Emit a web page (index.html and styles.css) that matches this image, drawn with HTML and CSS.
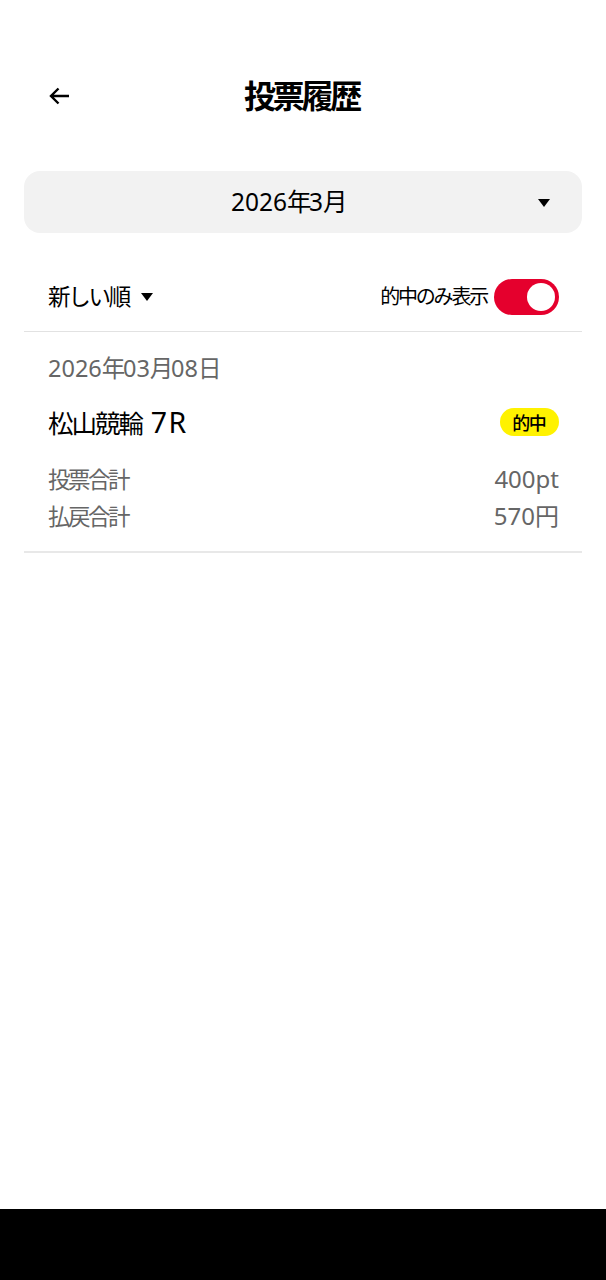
FILE: index.html
```html
<!DOCTYPE html>
<html lang="ja">
<head>
<meta charset="utf-8">
<title>投票履歴</title>
<link rel="stylesheet" href="styles.css">
</head>
<body>
<div class="page">
  <main class="main">
    <header class="header">
      <button class="back" aria-label="戻る">
        <svg width="24" height="20" viewBox="0 0 24 20"><path d="M3 10H21M10.5 2.5L3 10l7.5 7.5" fill="none" stroke="#000" stroke-width="2.4" stroke-linecap="butt" stroke-linejoin="miter"/></svg>
      </button>
      <h1 class="title">投票履歴</h1>
    </header>

    <div class="month-select">
      <span class="month-label"><span class="lt">2026</span>年<span class="lt">3</span>月</span>
      <span class="tri tri-month"></span>
    </div>

    <div class="filter-row">
      <div class="sort"><span class="jp">新しい順</span><span class="tri tri-sort"></span></div>
      <div class="hit-filter">
        <span class="hit-label">的中のみ表示</span>
        <span class="toggle"><span class="knob"></span></span>
      </div>
    </div>

    <section class="card">
      <div class="date"><span class="lt">2026</span>年<span class="lt">03</span>月<span class="lt">08</span>日</div>
      <div class="race-row">
        <span class="race">松山競輪<span class="race-num"> 7R</span></span>
        <span class="badge">的中</span>
      </div>
      <div class="stat"><span class="stat-label">投票合計</span><span class="stat-value">400pt</span></div>
      <div class="stat"><span class="stat-label">払戻合計</span><span class="stat-value">570円</span></div>
    </section>
  </main>
  <footer class="navbar"></footer>
</div>
</body>
</html>
```

FILE: styles.css
```css
* { box-sizing: border-box; }
html, body { margin: 0; padding: 0; }
body {
  font-family: "Noto Sans", "Noto Sans CJK JP", sans-serif;
  background: #fff;
  color: #000;
}
.page {
  min-height: 1280px;
  display: flex;
  flex-direction: column;
}
.main { flex: 1; padding: 0 24px; }
.lt { letter-spacing: 0; }
.header {
  height: 56px;
  margin-top: 68px;
  display: flex;
  align-items: center;
  justify-content: center;
  position: relative;
}
.back {
  position: absolute;
  left: 24px;
  top: 18px;
  width: 24px;
  height: 20px;
  padding: 0;
  border: 0;
  background: none;
  display: flex;
}
.title {
  margin: 0 3px 0 0;
  font-size: 32px;
  font-weight: 700;
  line-height: 40px;
  letter-spacing: -0.1em;
}
.month-select {
  margin-top: 47px;
  height: 62px;
  border-radius: 16px;
  background: #f2f2f2;
  display: flex;
  align-items: center;
  justify-content: center;
  position: relative;
}
.month-label {
  font-size: 24.5px;
  line-height: 30px;
  letter-spacing: -0.1em;
  margin-left: -30px;
}
.tri {
  width: 0;
  height: 0;
  border-left: 6px solid transparent;
  border-right: 6px solid transparent;
  border-top: 8px solid #000;
  display: inline-block;
}
.tri-month { position: absolute; right: 32px; top: 28px; }
.filter-row {
  display: flex;
  align-items: center;
  justify-content: space-between;
  padding: 46px 23px 16px 24px;
  border-bottom: 1px solid #e2e2e2;
}
.sort {
  font-size: 22.5px;
  line-height: 36px;
  display: flex;
  align-items: center;
}
.sort .jp { letter-spacing: -0.1em; }
.tri-sort { margin-left: 12px; }
.hit-filter { display: flex; align-items: center; gap: 7px; }
.hit-label { font-size: 20px; line-height: 36px; letter-spacing: -0.11em; }
.toggle {
  width: 65px;
  height: 36px;
  border-radius: 18px;
  background: #e5002d;
  display: flex;
  align-items: center;
  justify-content: flex-end;
  padding-right: 4px;
}
.knob {
  width: 28px;
  height: 28px;
  border-radius: 50%;
  background: #fff;
}
.card {
  padding: 22px 23px 16px 24px;
  border-bottom: 2px solid #e8e8e8;
}
.date {
  font-size: 23.5px;
  line-height: 28px;
  color: #666;
  letter-spacing: -0.1em;
}
.race-row {
  margin-top: 22px;
  height: 36px;
  display: flex;
  align-items: center;
  justify-content: space-between;
}
.race { font-size: 25.5px; line-height: 36px; letter-spacing: -0.08em; }
.race-num { font-size: 28.5px; letter-spacing: 1.5px; }
.badge {
  height: 28px;
  width: 59px;
  border-radius: 14px;
  background: #fff200;
  font-size: 18px;
  font-weight: 500;
  letter-spacing: -0.08em;
  text-indent: -0.08em;
  display: flex;
  align-items: center;
  justify-content: center;
}
.race-row + .stat { margin-top: 21px; }
.stat {
  display: flex;
  justify-content: space-between;
  align-items: baseline;
  line-height: 36px;
  color: #666;
}
.stat-label { font-size: 22.5px; letter-spacing: -0.11em; }
.stat-value { font-size: 24px; }
.navbar { height: 71px; background: #000; }
```
